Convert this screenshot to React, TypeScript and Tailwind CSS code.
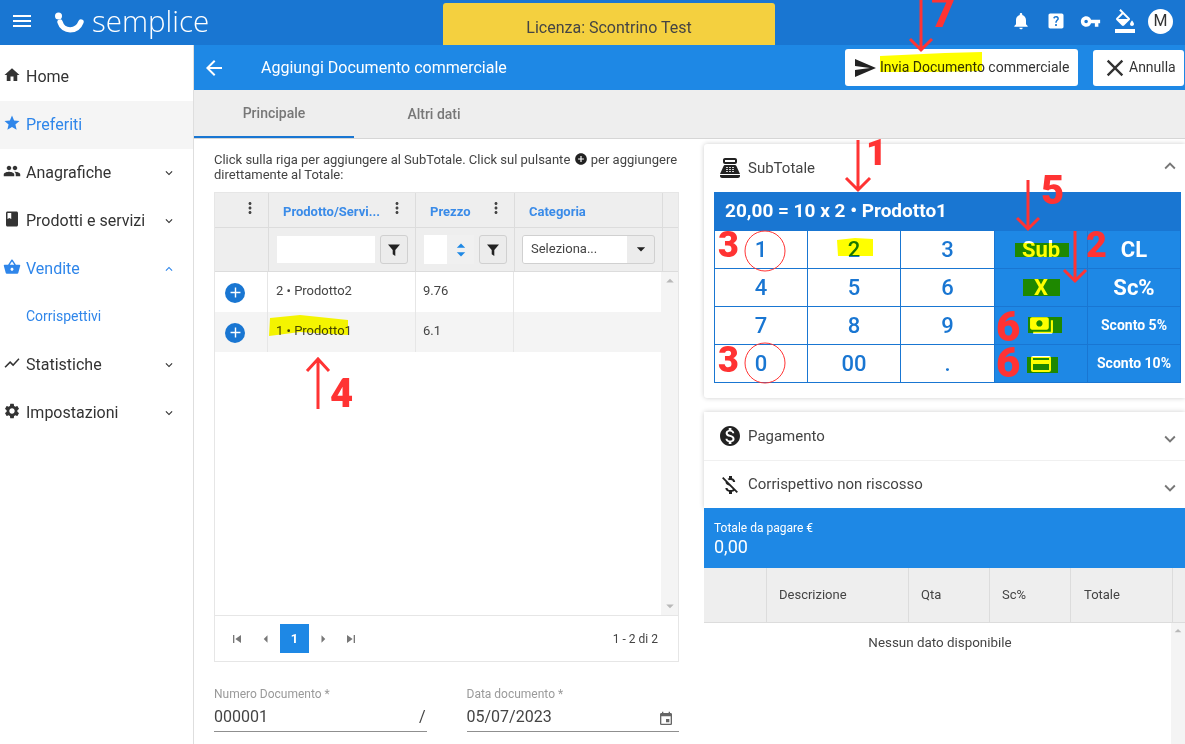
import type { ReactNode } from 'react';
import {
  MdMenu, MdHome, MdStar, MdPeople, MdBook, MdShoppingBasket, MdShowChart, MdSettings,
  MdKeyboardArrowDown, MdKeyboardArrowUp, MdArrowBack, MdSend, MdClose, MdNotifications,
  MdHelpCenter, MdVpnKey, MdFormatColorFill, MdPointOfSale, MdMonetizationOn, MdMoneyOff,
  MdMoreVert, MdEvent, MdAdd, MdAddCircle, MdPayments, MdOutlineCreditCard,
  MdSkipPrevious, MdSkipNext, MdArrowLeft, MdArrowRight, MdArrowDropUp, MdArrowDropDown,
} from 'react-icons/md';

const navItems = [
  { label: 'Home', icon: <MdHome size={18} /> },
  { label: 'Preferiti', icon: <MdStar size={18} />, active: true, selected: true },
  { label: 'Anagrafiche', icon: <MdPeople size={18} />, arrow: 'down' },
  { label: 'Prodotti e servizi', icon: <MdBook size={18} />, arrow: 'down' },
  { label: 'Vendite', icon: <MdShoppingBasket size={18} />, active: true, arrow: 'up' },
  { label: 'Corrispettivi', sub: true },
  { label: 'Statistiche', icon: <MdShowChart size={18} />, arrow: 'down' },
  { label: 'Impostazioni', icon: <MdSettings size={18} />, arrow: 'down' },
];

function Sidebar() {
  return (
    <aside className="w-[194px] shrink-0 border-r border-[#dedede] bg-white pt-[8px]">
      {navItems.map((item) => (
        <div
          key={item.label}
          className={`relative flex h-12 items-center pl-[26px] ${item.selected ? 'bg-[#f5f5f5]' : ''} ${item.active || item.sub ? 'text-[#2f86ea]' : 'text-[#333333]'} ${item.sub ? 'pb-[2px] text-[14px]' : 'text-[16px]'}`}
        >
          {item.icon && <span className="absolute left-[3px] top-[13px]">{item.icon}</span>}
          {item.label}
          {item.arrow === 'down' && <MdKeyboardArrowDown size={14} className="absolute left-[162px] top-[17px]" />}
          {item.arrow === 'up' && <MdKeyboardArrowUp size={14} className="absolute left-[162px] top-[17px]" />}
        </div>
      ))}
    </aside>
  );
}

function Logo() {
  return (
    <div className="ml-[19px] flex items-center">
      <svg width="33" height="24" viewBox="0 0 33 24" className="mr-[6px] mt-[3px]">
        <circle cx="5.5" cy="5" r="3.5" fill="#fff" />
        <path d="M7 11 C10 21.5 24 21.5 28 11" fill="none" stroke="#fff" strokeWidth="5.4" strokeLinecap="round" />
      </svg>
      <span className="font-['Open_Sans'] text-[29.5px] font-light leading-none text-white">semplice</span>
    </div>
  );
}

function TopBar() {
  return (
    <header className="relative flex h-[45px] shrink-0 items-center bg-[#1976d2] pb-[3px] text-white">
      <MdMenu size={24} className="ml-[10px]" />
      <Logo />
      <div className="absolute left-[443px] top-[3px] flex h-[42px] w-[332px] items-center justify-center rounded-t-[3px] bg-[#f4d03f] pt-[7px] text-[16px] text-[#444444]">
        Licenza: Scontrino Test
      </div>
      <div className="ml-auto mr-[12px] flex items-center">
        <MdNotifications size={20} />
        <MdHelpCenter size={20} className="ml-[15px]" />
        <MdVpnKey size={21} className="ml-[14px]" />
        <MdFormatColorFill size={24} className="ml-[12px]" />
        <span className="ml-[11px] flex h-[25px] w-[25px] items-center justify-center rounded-full bg-white text-[16px] text-[#333333]">M</span>
      </div>
    </header>
  );
}

function ActionBar() {
  return (
    <div className="flex h-[45px] shrink-0 items-center bg-[#1e88e5] pl-[8px] pr-[1px] text-white">
      <MdArrowBack size={24} />
      <span className="ml-[35px] text-[16px]">Aggiungi Documento commerciale</span>
      <div className="ml-auto flex items-center gap-[15px]">
        <button className="flex h-[37px] w-[233px] items-center rounded-[3px] bg-white pb-[1px] pl-[8px] text-[14px] text-[#333333]">
          <MdSend size={24} className="mr-[3px] mt-[1px] text-[#222222]" />
          Invia Documento commerciale
        </button>
        <button className="flex h-[36px] w-[91px] items-center rounded-[3px] bg-white pl-[8px] text-[14px] text-[#333333]">
          <MdClose size={28} />
          Annulla
        </button>
      </div>
    </div>
  );
}

function Tabs() {
  return (
    <div className="flex h-[49px] shrink-0 border-b border-[#d6d6d6] bg-[#eeeeee] text-[14px] font-medium text-[#777777]">
      <div className="flex w-[160px] items-center justify-center border-b-2 border-[#1976d2]">Principale</div>
      <div className="flex w-[160px] items-center justify-center">Altri dati</div>
    </div>
  );
}

function HeaderCell({ children, width, menu }: { children?: ReactNode; width: string; menu?: boolean }) {
  return (
    <div className={`relative flex h-full shrink-0 items-center border-r border-[#dcdcdc] pl-[14px] pt-[3px] text-[13px] font-bold text-[#3a8be8] ${width}`}>
      {children}
      {menu && <MdMoreVert size={18} className="absolute right-[9px] top-[6px] text-[#444444]" />}
    </div>
  );
}

function FilterButton() {
  return (
    <span className="flex h-[29px] w-[28px] shrink-0 items-center justify-center rounded-[3px] border border-[#d0d0d0] bg-[#ececec]">
      <svg width="14" height="14" viewBox="0 0 14 14" fill="#222222">
        <path d="M1 1.5H13L8.3 7V13L5.7 11.2V7Z" />
      </svg>
    </span>
  );
}

function ProductRow({ code, price, odd }: { code: string; price: string; odd?: boolean }) {
  return (
    <div className={`flex h-[40px] text-[13px] text-[#444444] ${odd ? 'bg-[#f4f4f4]' : 'bg-white'}`}>
      <div className="flex w-[53px] shrink-0 items-center border-r border-[#e6e6e6] pl-[10px] pt-[1px]">
        <span className="flex h-[20px] w-[20px] items-center justify-center rounded-full bg-[#1976d2] text-white">
          <MdAdd size={17} />
        </span>
      </div>
      <div className="flex w-[148px] shrink-0 items-center border-r border-[#e6e6e6] pb-[3px] pl-[8px]">{code}</div>
      <div className="flex w-[98px] shrink-0 items-center border-r border-[#e6e6e6] pb-[3px] pl-[7px]">{price}</div>
    </div>
  );
}

function ProductTable() {
  return (
    <div className="border border-[#e6e6e6] bg-white">
      <div className="flex h-[35px] border-b border-[#dcdcdc] bg-[#eeeeee]">
        <HeaderCell width="w-[54px]" menu />
        <HeaderCell width="w-[147px]" menu>Prodotto/Servi...</HeaderCell>
        <HeaderCell width="w-[99px]" menu>Prezzo</HeaderCell>
        <HeaderCell width="w-[148px]">Categoria</HeaderCell>
      </div>
      <div className="flex h-[44px] items-center border-b border-[#dcdcdc] bg-[#eeeeee]">
        <div className="h-full w-[54px] shrink-0 border-r border-[#dcdcdc]" />
        <div className="flex h-full w-[147px] shrink-0 items-center gap-[5px] border-r border-[#dcdcdc] pl-[8px]">
          <span className="h-[27px] w-[98px] bg-white" />
          <FilterButton />
        </div>
        <div className="flex h-full w-[99px] shrink-0 items-center gap-[4px] border-r border-[#dcdcdc] pl-[8px]">
          <span className="flex h-[29px] w-[51px] shrink-0 items-stretch">
            <span className="w-[23px] bg-white" />
            <span className="flex w-[27px] flex-col items-center justify-center bg-[#f0f0f0] text-[#1e88e5]">
              <MdArrowDropUp size={20} className="-mb-[6px]" />
              <MdArrowDropDown size={20} className="-mt-[6px]" />
            </span>
          </span>
          <FilterButton />
        </div>
        <div className="flex h-full w-[148px] shrink-0 items-center border-r border-[#dcdcdc] pl-[7px]">
          <span className="flex h-[29px] w-[133px] overflow-hidden rounded-[3px] border border-[#d0d0d0] bg-[#ececec] text-[13px] text-[#444444]">
            <span className="flex w-[104px] items-center bg-white pb-[1px] pl-[8px]">Seleziona...</span>
            <MdArrowDropDown size={20} className="ml-[4px] mt-[3px] text-[#222222]" />
          </span>
        </div>
      </div>
      <div className="relative h-[344px] border-b border-[#e6e6e6]">
        <ProductRow code="2 • Prodotto2" price="9.76" />
        <ProductRow code="1 • Prodotto1" price="6.1" odd />
        <Scrollbar />
      </div>
      <div className="flex h-[45px] items-center pl-[14px] pr-[20px] text-[#777777]">
        <MdSkipPrevious size={16} />
        <MdArrowLeft size={18} className="ml-[12px]" />
        <span className="ml-[5px] flex h-[29px] w-[29px] items-center justify-center bg-[#1e88e5] text-[13px] font-bold text-white">1</span>
        <MdArrowRight size={18} className="ml-[5px]" />
        <MdSkipNext size={16} className="ml-[11px]" />
        <span className="ml-auto text-[12px] text-[#444444]">1 - 2 di 2</span>
      </div>
    </div>
  );
}

function Scrollbar() {
  return (
    <div className="absolute inset-y-0 right-0 flex w-[17px] flex-col items-center justify-between bg-[#f4f4f4] text-[#b8b8b8]">
      <MdArrowDropUp size={18} />
      <MdArrowDropDown size={18} />
    </div>
  );
}

function Field({ label, value, children, width }: { label: string; value: string; children?: ReactNode; width: string }) {
  return (
    <div className={width}>
      <div className="text-[12px] text-[#9a9a9a]">{label}</div>
      <div className="mt-[3px] flex h-[26px] items-center justify-between border-b border-[#8f8f8f] pb-[3px] text-[16px] text-[#444444]">
        {value}
        {children}
      </div>
    </div>
  );
}

function LeftColumn() {
  return (
    <div className="w-[510px] shrink-0 px-[20px] pr-[25px] pt-[13px]">
      <p className="h-[40px] text-[13px] leading-[15px] text-[#444444]">
        Click sulla riga per aggiungere al SubTotale. Click sul pulsante{' '}
        <MdAddCircle size={14} className="inline align-top text-[#222222]" /> per aggiungere direttamente al Totale:
      </p>
      <ProductTable />
      <div className="mt-[23px] flex gap-[40px]">
        <Field label="Numero Documento *" value="000001" width="w-[213px]">
          <span className="pr-[1px]">/</span>
        </Field>
        <Field label="Data documento *" value="05/07/2023" width="w-[213px]">
          <MdEvent size={16} className="mr-[5px] mt-[3px] text-[#666666]" />
        </Field>
      </div>
    </div>
  );
}

const keys: ReactNode[] = ['1', '2', '3', 'Sub', 'CL', '4', '5', '6', 'X', 'Sc%', '7', '8', '9',
  <MdPayments key="cash" size={25} />, 'Sconto 5%', '0', '00', '.', <MdOutlineCreditCard key="card" size={24} />, 'Sconto 10%'];

function Keypad() {
  return (
    <div className="mx-[10px] w-[467px] border-l border-[#1976d2]">
      <div className="grid grid-cols-[93px_93px_94px_93px_93px] grid-rows-[38px_38px_38px_38px]">
        {keys.map((key, i) => {
          const side = i % 5 > 2;
          const small = i === 14 || i === 19;
          return (
            <div
              key={i}
              className={`flex items-center justify-center border-b border-r border-[#1976d2] ${side ? 'bg-[#1e88e5] text-white' : 'bg-white text-[#1976d2]'} ${small ? 'text-[14px] font-bold' : side ? 'text-[22px] font-bold' : 'text-[22px] font-medium'}`}
            >
              {key}
            </div>
          );
        })}
      </div>
    </div>
  );
}

function AccordionRow({ icon, label, open, divider }: { icon: ReactNode; label: string; open?: boolean; divider?: boolean }) {
  return (
    <div className={`flex h-[48px] items-center pl-[14px] pr-[4px] text-[15px] text-[#444444] ${divider ? 'border-t border-[#f0f0f0]' : ''}`}>
      <span className="mr-[6px] flex w-[24px] shrink-0 justify-center text-[#222222]">{icon}</span>
      {label}
      {open
        ? <MdKeyboardArrowUp size={22} className="mb-[4px] ml-auto text-[#777777]" />
        : <MdKeyboardArrowDown size={22} className="ml-auto mt-[6px] text-[#777777]" />}
    </div>
  );
}

function RightColumn() {
  return (
    <div className="min-w-0 flex-1 pt-[5px]">
      <section className="h-[254px] rounded-l-[3px] bg-white shadow-[0_0_5px_rgba(0,0,0,0.2)]">
        <AccordionRow icon={<MdPointOfSale size={24} />} label="SubTotale" open />
        <div className="mx-[10px] flex h-[39px] w-[467px] items-center bg-[#1976d2] pl-[11px] text-[19px] font-bold text-white">
          20,00 = 10 x 2 • Prodotto1
        </div>
        <Keypad />
      </section>
      <section className="mt-[14px] h-[96px] bg-white shadow-[0_0_5px_rgba(0,0,0,0.2)]">
        <AccordionRow icon={<MdMonetizationOn size={24} />} label="Pagamento" />
        <AccordionRow icon={<MdMoneyOff size={24} />} label="Corrispettivo non riscosso" divider />
      </section>
      <div className="h-[60px] bg-[#1e88e5] pl-[10px] pt-[13px] text-white">
        <div className="text-[12px] leading-[14px]">Totale da pagare €</div>
        <div className="text-[18px] leading-[24px]">0,00</div>
      </div>
      <div className="flex h-[55px] border-b border-[#dcdcdc] bg-[#eeeeee] text-[13px] text-[#444444]">
        <div className="w-[63px] border-r border-[#dcdcdc]" />
        <div className="flex w-[142px] items-center border-r border-[#dcdcdc] pl-[12px]">Descrizione</div>
        <div className="flex w-[81px] items-center border-r border-[#dcdcdc] pl-[12px]">Qta</div>
        <div className="flex w-[81px] items-center border-r border-[#dcdcdc] pl-[12px]">Sc%</div>
        <div className="flex w-[102px] items-center border-r border-[#dcdcdc] pl-[13px]">Totale</div>
      </div>
      <div className="relative h-[130px] pr-[9px] pt-[10px] text-center text-[13.4px] text-[#444444]">
        Nessun dato disponibile
        <div className="absolute inset-y-0 right-0 flex w-[14px] flex-col items-center bg-[#f4f4f4] text-[#b8b8b8]">
          <MdArrowDropUp size={16} />
        </div>
      </div>
    </div>
  );
}

function Num({ children, className }: { children: string; className: string }) {
  return (
    <span className={`absolute font-black leading-none text-[#ff3333] ${className}`}>{children}</span>
  );
}

// Hand-drawn marks laid over the screenshot: arrows, circles, marker strokes
function Annotations() {
  const arrows = [
    'M921 0V50M910 39L921 50L932 39',
    'M858 140V190M846 178L858 190L870 178',
    'M1028 180V229M1017 218L1028 229L1039 218',
    'M1075 231V281M1064 270L1075 281L1086 270',
    'M318 409V359M307 371L318 359L329 371',
  ];
  return (
    <div className="pointer-events-none absolute inset-0 overflow-hidden">
      <svg width="1185" height="744" className="absolute inset-0 mix-blend-multiply">
        <path d="M880 56L945 53L982 52V71L930 72L880 72Z" fill="#ffff00" />
        <path d="M837 240L855 238L873 239V256L838 256Z" fill="#ffff00" />
        <rect x="1015" y="243" width="54" height="14" fill="#ffff00" />
        <rect x="1023" y="279" width="37" height="17" fill="#ffff00" />
        <rect x="1028" y="317" width="34" height="16" fill="#ffff00" />
        <rect x="1027" y="357" width="31" height="16" fill="#ffff00" />
        <path d="M270 318L300 315L348 320V335L300 332L269 336Z" fill="#ffff00" />
      </svg>
      <svg width="1185" height="744" className="absolute inset-0">
        {arrows.map((d) => (
          <path key={d} d={d} fill="none" stroke="#ff3333" strokeWidth="3" />
        ))}
        <circle cx="765" cy="251" r="20" fill="none" stroke="#ff3333" />
        <circle cx="765" cy="363" r="20" fill="none" stroke="#ff3333" />
      </svg>
      <Num className="left-[931px] top-[-8px] text-[42px]">7</Num>
      <Num className="left-[866px] top-[135px] text-[36px]">1</Num>
      <Num className="left-[1041px] top-[171px] text-[40px]">5</Num>
      <Num className="left-[1086px] top-[227px] text-[36px]">2</Num>
      <Num className="left-[718px] top-[227px] text-[36px]">3</Num>
      <Num className="left-[718px] top-[342px] text-[36px]">3</Num>
      <Num className="left-[996px] top-[306px] text-[42px]">6</Num>
      <Num className="left-[996px] top-[342px] text-[42px]">6</Num>
      <Num className="left-[330px] top-[374px] text-[40px]">4</Num>
    </div>
  );
}

export default function App() {
  return (
    <div className="relative flex h-[744px] w-[1185px] flex-col overflow-hidden bg-white font-['Roboto',sans-serif]">
      <TopBar />
      <div className="flex min-h-0 flex-1">
        <Sidebar />
        <main className="flex min-w-0 flex-1 flex-col">
          <ActionBar />
          <Tabs />
          <div className="flex min-h-0 flex-1">
            <LeftColumn />
            <RightColumn />
          </div>
        </main>
      </div>
      <Annotations />
    </div>
  );
}
